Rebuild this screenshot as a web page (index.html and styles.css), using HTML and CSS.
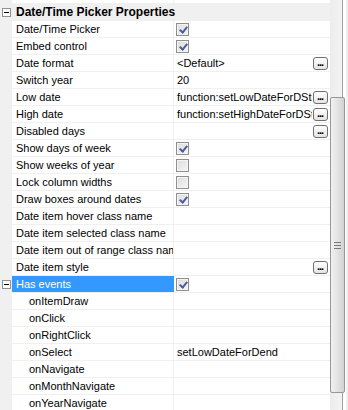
FILE: index.html
```html
<!DOCTYPE html>
<html lang="en">
<head>
    <meta charset="UTF-8">
    <title>Date/Time Picker Properties</title>
    <link rel="stylesheet" href="styles.css">
</head>
<body>
    <div class="grid">
        <div class="props">
            <div class="row top"><span class="gutter"></span><span class="name"></span><span class="value"></span></div>
            <div class="row cat"><span class="gutter"><i class="toggle"></i></span><span class="cat-name">Date/Time Picker Properties</span></div>
            <div class="row"><span class="gutter"></span><span class="name">Date/Time Picker</span><span class="value"><i class="check on"></i></span></div>
            <div class="row"><span class="gutter"></span><span class="name">Embed control</span><span class="value"><i class="check on"></i></span></div>
            <div class="row"><span class="gutter"></span><span class="name">Date format</span><span class="value"><span class="text">&lt;Default&gt;</span><b class="dots">...</b></span></div>
            <div class="row"><span class="gutter"></span><span class="name">Switch year</span><span class="value"><span class="text">20</span></span></div>
            <div class="row"><span class="gutter"></span><span class="name">Low date</span><span class="value"><span class="text">function:setLowDateForDStart</span><b class="dots">...</b></span></div>
            <div class="row"><span class="gutter"></span><span class="name">High date</span><span class="value"><span class="text">function:setHighDateForDStart</span><b class="dots">...</b></span></div>
            <div class="row"><span class="gutter"></span><span class="name">Disabled days</span><span class="value"><span class="text"></span><b class="dots">...</b></span></div>
            <div class="row"><span class="gutter"></span><span class="name">Show days of week</span><span class="value"><i class="check on"></i></span></div>
            <div class="row"><span class="gutter"></span><span class="name">Show weeks of year</span><span class="value"><i class="check"></i></span></div>
            <div class="row"><span class="gutter"></span><span class="name">Lock column widths</span><span class="value"><i class="check"></i></span></div>
            <div class="row"><span class="gutter"></span><span class="name">Draw boxes around dates</span><span class="value"><i class="check on"></i></span></div>
            <div class="row"><span class="gutter"></span><span class="name">Date item hover class name</span><span class="value"></span></div>
            <div class="row"><span class="gutter"></span><span class="name">Date item selected class name</span><span class="value"></span></div>
            <div class="row"><span class="gutter"></span><span class="name">Date item out of range class name</span><span class="value"></span></div>
            <div class="row"><span class="gutter"></span><span class="name">Date item style</span><span class="value"><span class="text"></span><b class="dots">...</b></span></div>
            <div class="row selected"><span class="gutter"><i class="toggle"></i></span><span class="name">Has events</span><span class="value"><i class="check on"></i></span></div>
            <div class="row sub"><span class="gutter"></span><span class="name">onItemDraw</span><span class="value"></span></div>
            <div class="row sub"><span class="gutter"></span><span class="name">onClick</span><span class="value"></span></div>
            <div class="row sub"><span class="gutter"></span><span class="name">onRightClick</span><span class="value"></span></div>
            <div class="row sub"><span class="gutter"></span><span class="name">onSelect</span><span class="value"><span class="text">setLowDateForDend</span></span></div>
            <div class="row sub"><span class="gutter"></span><span class="name">onNavigate</span><span class="value"></span></div>
            <div class="row sub"><span class="gutter"></span><span class="name">onMonthNavigate</span><span class="value"></span></div>
            <div class="row sub"><span class="gutter"></span><span class="name">onYearNavigate</span><span class="value"></span></div>
        </div>
        <div class="scrollbar">
            <div class="thumb"><i class="grip"></i></div>
        </div>
    </div>
</body>
</html>
```

FILE: styles.css
```css
body {
    margin: 0;
    padding: 0;
    background: #f0f0f0;
    font-family: "Liberation Sans", Arial, sans-serif;
    font-size: 11px;
    color: #000;
}

.grid {
    display: flex;
    width: 348px;
    height: 410px;
    overflow: hidden;
}

.props {
    width: 330px;
    flex: none;
    background: #fff;
}

.row {
    display: flex;
    height: 16px;
    line-height: 16px;
    border-bottom: 1px solid #f0f0f0;
    white-space: nowrap;
}

.row.top {
    height: 3px;
}

.gutter {
    flex: none;
    width: 12px;
    background: #f0f0f0;
    display: flex;
    align-items: center;
}

.name {
    flex: none;
    width: 157px;
    padding-left: 4px;
    border-right: 1px solid #f0f0f0;
    overflow: hidden;
}

.sub .name {
    width: 144px;
    padding-left: 17px;
}

.selected .name {
    background: #3399ff;
    color: #fff;
    border-right-color: #3399ff;
}

.value {
    flex: 1;
    display: flex;
    align-items: center;
    padding-left: 2px;
    padding-right: 2px;
    overflow: hidden;
}

.value .text {
    flex: 1;
    min-width: 0;
    padding-left: 1px;
    overflow: hidden;
}

.row.cat {
    background: #f0f0f0;
}

.cat-name {
    padding-left: 4px;
    font-weight: bold;
    font-size: 12px;
}

.toggle {
    width: 7px;
    height: 7px;
    margin-left: 2px;
    border: 1px solid #919191;
    background: #fff;
    position: relative;
}

.toggle::after {
    content: "";
    position: absolute;
    left: 1px;
    top: 3px;
    width: 5px;
    height: 1px;
    background: #000;
}

.check {
    width: 11px;
    height: 11px;
    border: 1px solid #8f8f8f;
    background: linear-gradient(135deg, #dcdcdc, #f6f6f6);
    box-shadow: inset 0 0 0 1px #f4f4f4;
    position: relative;
}

.check.on::after {
    content: "";
    position: absolute;
    left: 4px;
    top: 1px;
    width: 3px;
    height: 6px;
    border: solid #4a5c9a;
    border-width: 0 2px 2px 0;
    transform: rotate(40deg);
}

.dots {
    flex: none;
    width: 13px;
    height: 11px;
    margin-left: 1px;
    border: 1px solid #6f6f6f;
    border-radius: 3px;
    background: linear-gradient(#ffffff, #e4e4e4);
    font-size: 11px;
    line-height: 9px;
    text-align: center;
    letter-spacing: -1px;
    text-indent: -1px;
    overflow: hidden;
}

.scrollbar {
    flex: none;
    width: 18px;
    height: 410px;
    background: linear-gradient(90deg, #ececec, #f4f4f4 80%, #ececec);
    border-right: 2px solid #f0f0f0;
    box-shadow: inset -3px 0 0 0 #fff, inset -4px 0 0 0 #a0a0a0;
    padding-top: 97px;
    box-sizing: border-box;
}

.thumb {
    width: 13px;
    height: 294px;
    border: 1px solid #979797;
    border-radius: 2px;
    background: linear-gradient(90deg, #f1f1f1, #e3e3e3 50%, #d2d2d2);
    display: flex;
    align-items: center;
    justify-content: center;
}

.grip {
    width: 7px;
    height: 5px;
    border-top: 1px solid #777;
    border-bottom: 1px solid #777;
    position: relative;
}

.grip::after {
    content: "";
    position: absolute;
    left: 0;
    top: 2px;
    width: 7px;
    height: 1px;
    background: #777;
}
```
